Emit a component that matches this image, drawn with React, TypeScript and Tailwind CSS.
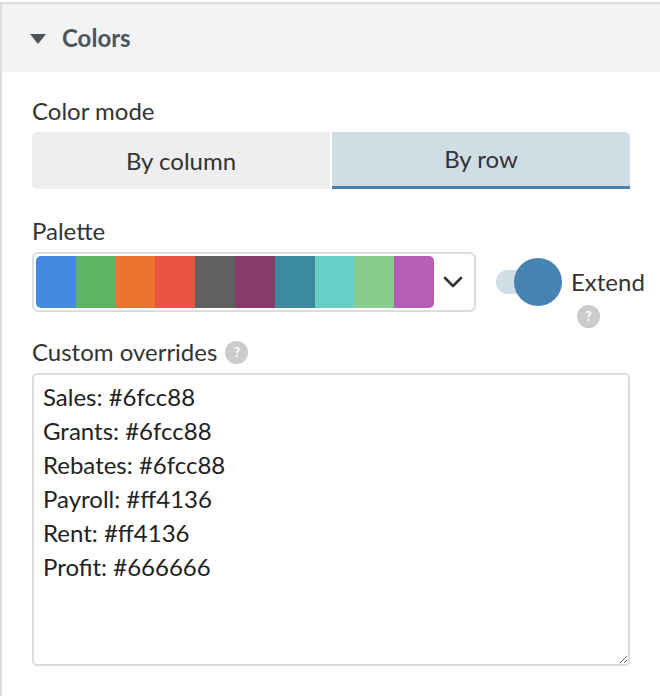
const swatches = [
  '#4389e0',
  '#5cb562',
  '#ec7430',
  '#e95343',
  '#606060',
  '#883a6a',
  '#3d8b9e',
  '#66d0c4',
  '#88cc8c',
  '#b75db8',
];

const overrides = `Sales: #6fcc88
Grants: #6fcc88
Rebates: #6fcc88
Payroll: #ff4136
Rent: #ff4136
Profit: #666666`;

const HelpDot = () => (
  <span className="inline-flex h-[23px] w-[23px] shrink-0 items-center justify-center rounded-full bg-[#cccccc] text-[14px] font-bold leading-none text-white">
    ?
  </span>
);

const App = () => {
  return (
    <div className="h-[696px] w-[660px] overflow-hidden bg-white pt-[2px] font-['Lato',sans-serif] text-[#333333]">
      <div className="h-full border-l-2 border-t-2 border-[#dddddd]">
        {/* section header */}
        <div className="flex h-[68px] items-center gap-[16px] bg-[#f3f3f3] pl-[28px]">
          <svg width="16" height="10" viewBox="0 0 16 10" className="mt-[2px]">
            <path d="M0 0h16L8 10z" fill="#4d555c" />
          </svg>
          <span className="text-[24px] font-bold text-[#4d555c]">Colors</span>
        </div>

        <div className="px-[30px] pt-[25px]">
          <div className="h-[28px] text-[24px] leading-[28px]">Color mode</div>
          <div className="mt-[7px] flex h-[57px] gap-[2px]">
            <button className="flex-1 rounded-l-[5px] bg-[#eeeeee] text-[24px]">By column</button>
            <button className="flex-1 rounded-tr-[5px] border-b-[3px] border-[#4682ad] bg-[#cfdde5] text-[24px]">
              By row
            </button>
          </div>

          <div className="mt-[28px] h-[28px] text-[24px] leading-[28px]">Palette</div>
          <div className="mt-[7px] flex items-center">
            <div className="flex h-[60px] w-[444px] shrink-0 items-center rounded-[6px] border-2 border-[#dddddd] p-[2px]">
              <div className="flex h-full w-[398px] overflow-hidden rounded-[5px]">
                {swatches.map((c) => (
                  <div key={c} className="h-full flex-1" style={{ backgroundColor: c }} />
                ))}
              </div>
              <svg width="20" height="12" viewBox="0 0 20 12" className="ml-[9px]">
                <path d="M2 2l8 8 8-8" fill="none" stroke="#333333" strokeWidth="2.6" strokeLinecap="round" strokeLinejoin="round" />
              </svg>
            </div>
            <div className="ml-[20px] flex shrink-0 items-center">
              <div className="relative h-[24px] w-[58px] shrink-0">
                <div className="h-full w-full rounded-full bg-[#d0dde5]" />
                <div className="absolute -top-[12px] left-[18px] h-[48px] w-[48px] rounded-full bg-[#4583b0]" />
              </div>
              <div className="relative ml-[17px] text-[24px]">
                Extend
                <div className="absolute left-[6px] top-[30px]">
                  <HelpDot />
                </div>
              </div>
            </div>
          </div>

          <div className="mt-[26px] flex h-[28px] items-center gap-[8px] text-[24px] leading-[28px]">
            Custom overrides
            <HelpDot />
          </div>
          <textarea
            readOnly
            defaultValue={overrides}
            className="mt-[7px] block h-[293px] w-full rounded-[5px] border-2 border-[#dddddd] px-[9px] py-[5px] text-[24px] leading-[34px] text-[#222222] outline-none"
          />
        </div>
      </div>
    </div>
  );
};

export default App;
